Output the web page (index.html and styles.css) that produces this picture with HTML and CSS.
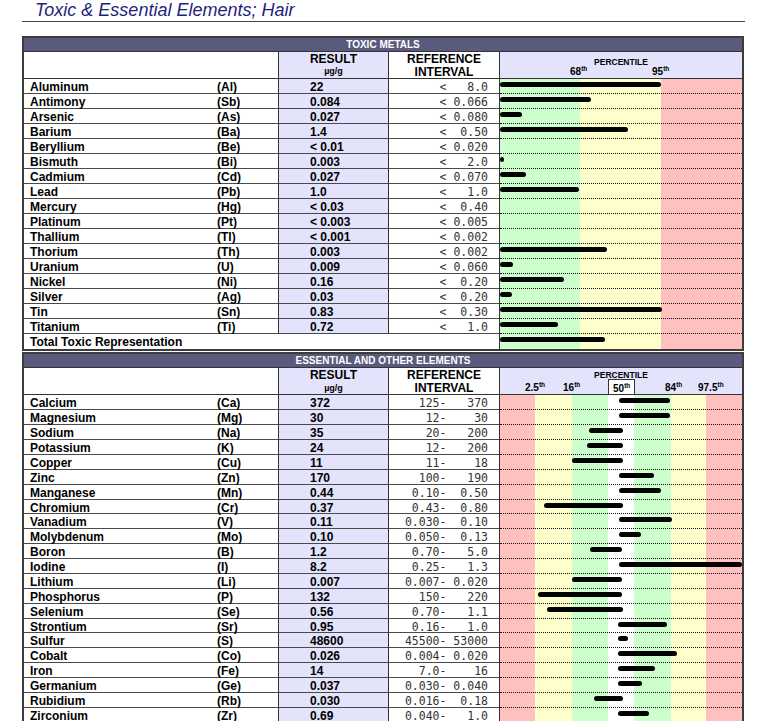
FILE: index.html
```html
<!DOCTYPE html>
<html lang="en">
<head>
<meta charset="utf-8">
<title>Toxic &amp; Essential Elements; Hair</title>
<link rel="stylesheet" href="styles.css">
</head>
<body>
<header class="title-bar"><h1 class="title">Toxic &amp; Essential Elements; Hair</h1></header>

<section class="panel">
  <div class="band">TOXIC METALS</div>
  <div class="row head">
    <div class="c-name"></div><div class="c-sym"></div>
    <div class="c-res"><div class="h-main">RESULT</div><div class="unit">µg/g</div></div>
    <div class="c-ref"><div class="h-main">REFERENCE</div><div class="h-main">INTERVAL</div></div>
    <div class="c-chart head-chart">
      <span class="pct-title t-top">PERCENTILE</span>
      <span class="pl t-lab p68">68<sup>th</sup></span>
      <span class="pl t-lab p95">95<sup>th</sup></span>
    </div>
  </div>
  <div class="row"><div class="c-name">Aluminum</div><div class="c-sym">(Al)</div><div class="c-res">22</div><div class="c-ref">&lt;   8.0</div><div class="c-chart tox"><i class="bar" style="margin-left:0;width:161px"></i></div></div>
  <div class="row"><div class="c-name">Antimony</div><div class="c-sym">(Sb)</div><div class="c-res">0.084</div><div class="c-ref">&lt; 0.066</div><div class="c-chart tox"><i class="bar" style="margin-left:0;width:91px"></i></div></div>
  <div class="row"><div class="c-name">Arsenic</div><div class="c-sym">(As)</div><div class="c-res">0.027</div><div class="c-ref">&lt; 0.080</div><div class="c-chart tox"><i class="bar" style="margin-left:0;width:22px"></i></div></div>
  <div class="row"><div class="c-name">Barium</div><div class="c-sym">(Ba)</div><div class="c-res">1.4</div><div class="c-ref">&lt;  0.50</div><div class="c-chart tox"><i class="bar" style="margin-left:0;width:128px"></i></div></div>
  <div class="row"><div class="c-name">Beryllium</div><div class="c-sym">(Be)</div><div class="c-res">&lt; 0.01</div><div class="c-ref">&lt; 0.020</div><div class="c-chart tox"></div></div>
  <div class="row"><div class="c-name">Bismuth</div><div class="c-sym">(Bi)</div><div class="c-res">0.003</div><div class="c-ref">&lt;   2.0</div><div class="c-chart tox"><i class="bar" style="margin-left:0;width:4px"></i></div></div>
  <div class="row"><div class="c-name">Cadmium</div><div class="c-sym">(Cd)</div><div class="c-res">0.027</div><div class="c-ref">&lt; 0.070</div><div class="c-chart tox"><i class="bar" style="margin-left:0;width:26px"></i></div></div>
  <div class="row"><div class="c-name">Lead</div><div class="c-sym">(Pb)</div><div class="c-res">1.0</div><div class="c-ref">&lt;   1.0</div><div class="c-chart tox"><i class="bar" style="margin-left:0;width:79px"></i></div></div>
  <div class="row"><div class="c-name">Mercury</div><div class="c-sym">(Hg)</div><div class="c-res">&lt; 0.03</div><div class="c-ref">&lt;  0.40</div><div class="c-chart tox"></div></div>
  <div class="row"><div class="c-name">Platinum</div><div class="c-sym">(Pt)</div><div class="c-res">&lt; 0.003</div><div class="c-ref">&lt; 0.005</div><div class="c-chart tox"></div></div>
  <div class="row"><div class="c-name">Thallium</div><div class="c-sym">(Tl)</div><div class="c-res">&lt; 0.001</div><div class="c-ref">&lt; 0.002</div><div class="c-chart tox"></div></div>
  <div class="row"><div class="c-name">Thorium</div><div class="c-sym">(Th)</div><div class="c-res">0.003</div><div class="c-ref">&lt; 0.002</div><div class="c-chart tox"><i class="bar" style="margin-left:0;width:107px"></i></div></div>
  <div class="row"><div class="c-name">Uranium</div><div class="c-sym">(U)</div><div class="c-res">0.009</div><div class="c-ref">&lt; 0.060</div><div class="c-chart tox"><i class="bar" style="margin-left:0;width:13px"></i></div></div>
  <div class="row"><div class="c-name">Nickel</div><div class="c-sym">(Ni)</div><div class="c-res">0.16</div><div class="c-ref">&lt;  0.20</div><div class="c-chart tox"><i class="bar" style="margin-left:0;width:64px"></i></div></div>
  <div class="row"><div class="c-name">Silver</div><div class="c-sym">(Ag)</div><div class="c-res">0.03</div><div class="c-ref">&lt;  0.20</div><div class="c-chart tox"><i class="bar" style="margin-left:0;width:12px"></i></div></div>
  <div class="row"><div class="c-name">Tin</div><div class="c-sym">(Sn)</div><div class="c-res">0.83</div><div class="c-ref">&lt;  0.30</div><div class="c-chart tox"><i class="bar" style="margin-left:0;width:162px"></i></div></div>
  <div class="row"><div class="c-name">Titanium</div><div class="c-sym">(Ti)</div><div class="c-res">0.72</div><div class="c-ref">&lt;   1.0</div><div class="c-chart tox"><i class="bar" style="margin-left:0;width:58px"></i></div></div>
  <div class="row last"><div class="c-total">Total Toxic Representation</div><div class="c-chart tox"><i class="bar" style="margin-left:0;width:105px"></i></div></div>
</section>

<section class="panel panel-ess">
  <div class="band">ESSENTIAL AND OTHER ELEMENTS</div>
  <div class="row head">
    <div class="c-name"></div><div class="c-sym"></div>
    <div class="c-res"><div class="h-main">RESULT</div><div class="unit unit-low">µg/g</div></div>
    <div class="c-ref"><div class="h-main">REFERENCE</div><div class="h-main h-low">INTERVAL</div></div>
    <div class="c-chart head-chart">
      <span class="pct-title e-top">PERCENTILE</span>
      <span class="pl e-lab p2">2.5<sup>th</sup></span>
      <span class="pl e-lab p16">16<sup>th</sup></span>
      <span class="pl p50">50<sup>th</sup></span>
      <span class="pl e-lab p84">84<sup>th</sup></span>
      <span class="pl e-lab p97">97.5<sup>th</sup></span>
    </div>
  </div>
  <div class="row"><div class="c-name">Calcium</div><div class="c-sym">(Ca)</div><div class="c-res">372</div><div class="c-ref">125-   370</div><div class="c-chart ess"><i class="bar" style="margin-left:119px;width:51px"></i></div></div>
  <div class="row"><div class="c-name">Magnesium</div><div class="c-sym">(Mg)</div><div class="c-res">30</div><div class="c-ref">12-    30</div><div class="c-chart ess"><i class="bar" style="margin-left:119px;width:51px"></i></div></div>
  <div class="row"><div class="c-name">Sodium</div><div class="c-sym">(Na)</div><div class="c-res">35</div><div class="c-ref">20-   200</div><div class="c-chart ess"><i class="bar" style="margin-left:89px;width:34px"></i></div></div>
  <div class="row"><div class="c-name">Potassium</div><div class="c-sym">(K)</div><div class="c-res">24</div><div class="c-ref">12-   200</div><div class="c-chart ess"><i class="bar" style="margin-left:87px;width:36px"></i></div></div>
  <div class="row"><div class="c-name">Copper</div><div class="c-sym">(Cu)</div><div class="c-res">11</div><div class="c-ref">11-    18</div><div class="c-chart ess"><i class="bar" style="margin-left:72px;width:51px"></i></div></div>
  <div class="row"><div class="c-name">Zinc</div><div class="c-sym">(Zn)</div><div class="c-res">170</div><div class="c-ref">100-   190</div><div class="c-chart ess"><i class="bar" style="margin-left:119px;width:35px"></i></div></div>
  <div class="row"><div class="c-name">Manganese</div><div class="c-sym">(Mn)</div><div class="c-res">0.44</div><div class="c-ref">0.10-  0.50</div><div class="c-chart ess"><i class="bar" style="margin-left:119px;width:42px"></i></div></div>
  <div class="row short"><div class="c-name">Chromium</div><div class="c-sym">(Cr)</div><div class="c-res">0.37</div><div class="c-ref">0.43-  0.80</div><div class="c-chart ess"><i class="bar" style="margin-left:44px;width:79px"></i></div></div>
  <div class="row"><div class="c-name">Vanadium</div><div class="c-sym">(V)</div><div class="c-res">0.11</div><div class="c-ref">0.030-  0.10</div><div class="c-chart ess"><i class="bar" style="margin-left:119px;width:53px"></i></div></div>
  <div class="row"><div class="c-name">Molybdenum</div><div class="c-sym">(Mo)</div><div class="c-res">0.10</div><div class="c-ref">0.050-  0.13</div><div class="c-chart ess"><i class="bar" style="margin-left:119px;width:22px"></i></div></div>
  <div class="row"><div class="c-name">Boron</div><div class="c-sym">(B)</div><div class="c-res">1.2</div><div class="c-ref">0.70-   5.0</div><div class="c-chart ess"><i class="bar" style="margin-left:90px;width:32px"></i></div></div>
  <div class="row"><div class="c-name">Iodine</div><div class="c-sym">(I)</div><div class="c-res">8.2</div><div class="c-ref">0.25-   1.3</div><div class="c-chart ess"><i class="bar" style="margin-left:119px;width:123px"></i></div></div>
  <div class="row"><div class="c-name">Lithium</div><div class="c-sym">(Li)</div><div class="c-res">0.007</div><div class="c-ref">0.007- 0.020</div><div class="c-chart ess"><i class="bar" style="margin-left:72px;width:50px"></i></div></div>
  <div class="row"><div class="c-name">Phosphorus</div><div class="c-sym">(P)</div><div class="c-res">132</div><div class="c-ref">150-   220</div><div class="c-chart ess"><i class="bar" style="margin-left:38px;width:84px"></i></div></div>
  <div class="row"><div class="c-name">Selenium</div><div class="c-sym">(Se)</div><div class="c-res">0.56</div><div class="c-ref">0.70-   1.1</div><div class="c-chart ess"><i class="bar" style="margin-left:47px;width:76px"></i></div></div>
  <div class="row short"><div class="c-name">Strontium</div><div class="c-sym">(Sr)</div><div class="c-res">0.95</div><div class="c-ref">0.16-   1.0</div><div class="c-chart ess"><i class="bar" style="margin-left:118px;width:49px"></i></div></div>
  <div class="row"><div class="c-name">Sulfur</div><div class="c-sym">(S)</div><div class="c-res">48600</div><div class="c-ref">45500- 53000</div><div class="c-chart ess"><i class="bar" style="margin-left:118px;width:10px"></i></div></div>
  <div class="row"><div class="c-name">Cobalt</div><div class="c-sym">(Co)</div><div class="c-res">0.026</div><div class="c-ref">0.004- 0.020</div><div class="c-chart ess"><i class="bar" style="margin-left:118px;width:59px"></i></div></div>
  <div class="row"><div class="c-name">Iron</div><div class="c-sym">(Fe)</div><div class="c-res">14</div><div class="c-ref">7.0-    16</div><div class="c-chart ess"><i class="bar" style="margin-left:118px;width:37px"></i></div></div>
  <div class="row"><div class="c-name">Germanium</div><div class="c-sym">(Ge)</div><div class="c-res">0.037</div><div class="c-ref">0.030- 0.040</div><div class="c-chart ess"><i class="bar" style="margin-left:118px;width:24px"></i></div></div>
  <div class="row"><div class="c-name">Rubidium</div><div class="c-sym">(Rb)</div><div class="c-res">0.030</div><div class="c-ref">0.016-  0.18</div><div class="c-chart ess"><i class="bar" style="margin-left:94px;width:29px"></i></div></div>
  <div class="row"><div class="c-name">Zirconium</div><div class="c-sym">(Zr)</div><div class="c-res">0.69</div><div class="c-ref">0.040-   1.0</div><div class="c-chart ess"><i class="bar" style="margin-left:118px;width:31px"></i></div></div>
</section>
</body>
</html>
```

FILE: styles.css
```css
* { box-sizing: border-box; }
html, body { margin: 0; padding: 0; background: #fff; }
body {
  font-family: "Liberation Sans", Arial, sans-serif;
  color: #000;
  width: 768px;
  height: 721px;
  overflow: hidden;
}

.title-bar {
  margin-left: 22px;
  width: 723px;
  height: 22px;
  padding-left: 13px;
  border-bottom: 1px solid #444;
}
.title {
  margin: 0;
  font-family: "Liberation Sans", Arial, sans-serif;
  font-style: italic;
  font-weight: normal;
  font-size: 18px;
  line-height: 20px;
  color: #1f1f7c;
}

.panel {
  margin-left: 22px;
  margin-top: 14px;
  width: 722px;
  border: 2px solid #3c3c3c;
}
.panel-ess { margin-top: 1px; }

.band {
  height: 14px;
  background: #5a5a7e;
  border-bottom: 1px solid #333;
  color: #fff;
  font-weight: bold;
  font-size: 10px;
  line-height: 13px;
  text-align: center;
}

.row {
  display: grid;
  grid-template-columns: 193px 61px 110px 112px 242px;
  grid-template-rows: 15px;
  height: 15px;
  font-size: 12px;
  font-weight: bold;
  line-height: 12px;
}
.row.short { height: 14px; grid-template-rows: 14px; }
.row > div { border-bottom: 1px solid #4a4a4a; white-space: nowrap; min-height: 0; }
.row.last > div { border-bottom: none; }

.c-name, .c-sym, .c-res, .c-ref, .c-total { padding-top: 2px; }
.c-name { padding-left: 6px; }
.c-res {
  background: #e3e3fb;
  border-left: 1px solid #333;
  padding-left: 31px;
}
.c-ref {
  border-left: 1px solid #333;
  border-right: 1px solid #333;
  text-align: right;
  padding-right: 11px;
  font-family: "DejaVu Sans Mono", "Liberation Mono", monospace;
  font-weight: normal;
  font-size: 11.5px;
  color: #333;
  white-space: pre !important;
}
.c-total {
  grid-column: 1 / 5;
  padding-left: 6px;
  border-right: 1px solid #333;
}

.row > .c-chart { border-bottom: 1px dotted #111; }
.row.last > .c-chart { border-bottom: none; }

.tox {
  background: linear-gradient(to right, #ccffcc 0 80px, #ffffcc 80px 161px, #ffc0c0 161px) no-repeat;
  background-origin: border-box;
  background-size: 100% 100%;
}
.ess {
  background: linear-gradient(to right,
    #ffc0c0 0 35px, #ffffcc 35px 72px, #ccffcc 72px 108px, #ffffff 108px 134px,
    #ccffcc 134px 171px, #ffffcc 171px 206px, #ffc0c0 206px) no-repeat;
  background-origin: border-box;
  background-size: 100% 100%;
}

.bar {
  display: block;
  height: 5px;
  margin-top: 3px;
  background: #000;
  border-radius: 3px;
}

/* header rows */
.row.head { height: 27px; grid-template-rows: 27px; }
.row.head > div { border-bottom: 1px solid #333; }
.row.head .c-res, .row.head .c-ref {
  padding: 1px 0 0 0;
  text-align: center;
  font-family: "Liberation Sans", Arial, sans-serif;
  font-weight: bold;
  font-size: 12px;
  color: #000;
}
.h-main { line-height: 13px; }
.unit { font-size: 9px; line-height: 11px; }
.unit-low { margin-top: 1px; }
.h-low { margin-top: 0; }

.head-chart {
  position: relative;
  background: #e3e3fb;
  font-size: 10px;
  line-height: 10px;
}
.pct-title {
  position: absolute;
  left: 0;
  right: 0;
  text-align: center;
  font-size: 8.5px;
  line-height: 10px;
}
.t-top { top: 5px; }
.e-top { top: 2px; }
.pl {
  position: absolute;
  font-size: 10px;
  line-height: 10px;
}
.pl sup {
  font-size: 6.5px;
  line-height: 0;
  vertical-align: 0;
  position: relative;
  top: -4px;
}
.t-lab { top: 15px; }
.p68 { left: 70px; }
.p95 { left: 152px; }
.e-lab { top: 15px; }
.p2 { left: 25px; }
.p16 { left: 63px; }
.p84 { left: 165px; }
.p97 { left: 198px; }
.p50 {
  left: 108px;
  top: 11px;
  width: 27px;
  height: 15px;
  padding: 4px 0 0 4px;
  background: #fff;
  border: 1px solid #333;
  border-bottom: none;
}
```
